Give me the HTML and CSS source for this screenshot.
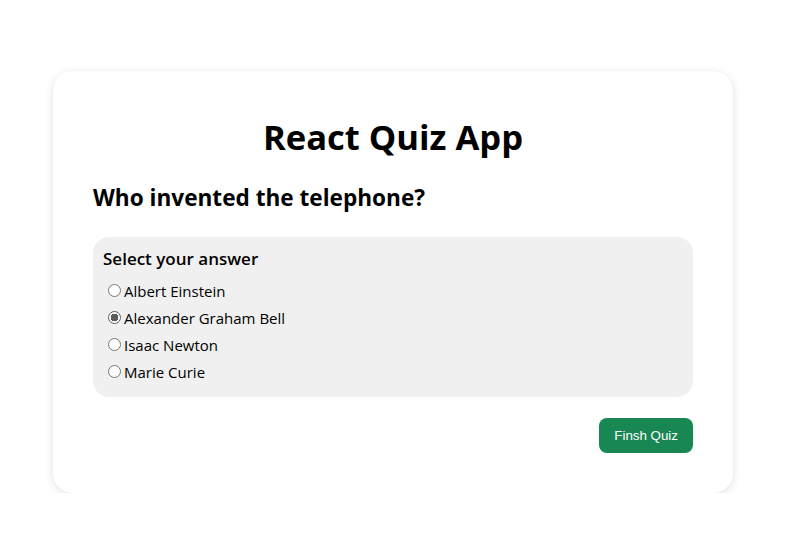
FILE: index.html
```html
<!DOCTYPE html>
<html lang="en">
<head>
<meta charset="utf-8">
<title>React Quiz App</title>
<link rel="stylesheet" href="styles.css">
</head>
<body>
<div class="page">
  <div class="card">
    <h1 class="title">React Quiz App</h1>
    <h2 class="question">Who invented the telephone?</h2>
    <div class="answers">
      <h3 class="answers-title">Select your answer</h3>
      <label class="option"><input type="radio" name="a">Albert Einstein</label>
      <label class="option"><input type="radio" name="a" checked>Alexander Graham Bell</label>
      <label class="option"><input type="radio" name="a">Isaac Newton</label>
      <label class="option"><input type="radio" name="a">Marie Curie</label>
    </div>
    <div class="actions">
      <button class="finish">Finsh Quiz</button>
    </div>
  </div>
</div>
</body>
</html>
```
FILE: styles.css
```css
html, body {
  margin: 0;
  padding: 0;
  background: #ffffff;
}
body {
  font-family: "Segoe UI", "Open Sans", "Noto Sans", sans-serif;
  color: #000;
}
.page {
  padding: 71px 0 0 53px;
}
.card {
  width: 680px;
  box-sizing: border-box;
  padding: 40px;
  background: #fff;
  border-radius: 20px;
  box-shadow: 0 2px 10px rgba(0, 0, 0, 0.12);
}
.title {
  margin: 0;
  text-align: center;
  font-size: 34.6px;
  line-height: 52px;
  font-weight: 700;
}
.question {
  margin: 20px 0 0;
  font-size: 22.6px;
  line-height: 30px;
  font-weight: 700;
}
.answers {
  margin-top: 24px;
  background: #f0f0f0;
  border-radius: 16px;
  padding: 10px 10px 12px;
}
.answers-title {
  margin: 0 0 6px;
  font-size: 17px;
  line-height: 24px;
  font-weight: 600;
}
.option {
  display: flex;
  align-items: center;
  height: 27px;
  font-size: 15px;
}
.option input {
  appearance: none;
  -webkit-appearance: none;
  box-sizing: border-box;
  margin: 0 3px 0 5px;
  width: 13px;
  height: 13px;
  border: 1px solid #767676;
  border-radius: 50%;
  background: #fff;
}
.option input:checked {
  background: radial-gradient(circle, #5c5c5c 0 3.6px, #fff 4px);
  border-color: #5c5c5c;
}
.actions {
  display: flex;
  justify-content: flex-end;
  margin-top: 21px;
}
.finish {
  font-family: "Liberation Sans", Arial, sans-serif;
  font-size: 13.33px;
  color: #fff;
  background: #198754;
  border: none;
  border-radius: 8px;
  height: 35px;
  padding: 0 15px;
}
```
